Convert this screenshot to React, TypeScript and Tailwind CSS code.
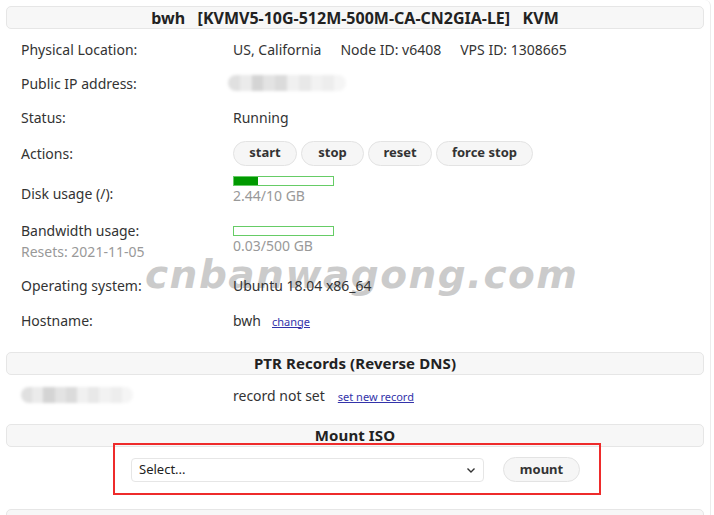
import React from "react";

const font = { fontFamily: '"Noto Sans", "Open Sans", sans-serif' };

function SectionHeader({ title, wide }: { title: string; wide?: boolean }) {
  return (
    <div
      className={`mx-[6px] h-[23px] rounded-[5px] border border-[#e6e6e6] bg-[#f7f7f7] flex items-center justify-center font-bold text-[#222] whitespace-pre ${
        wide ? "text-[16px]" : "text-[15px] tracking-[0.1px]"
      }`}
    >
      {title}
    </div>
  );
}

function Blur({ w }: { w: number }) {
  // pixelated / blurred IP placeholder
  const cells = [0.12, 0.08, 0.17, 0.11, 0.14, 0.06, 0.09, 0.05, 0.07, 0.04];
  return (
    <div className="flex h-[16px] blur-[1.5px] rounded-full overflow-hidden" style={{ width: w }}>
      {cells.map((a, i) => (
        <div key={i} className="flex-1 h-full" style={{ backgroundColor: `rgba(0,0,0,${a})` }} />
      ))}
    </div>
  );
}

function Bar({ pct }: { pct: number }) {
  return (
    <div className="w-[101px] h-[10px] border border-[#66cc66] bg-white">
      <div className="h-full bg-[#009900]" style={{ width: `${pct}%` }} />
    </div>
  );
}

function Btn({ label, w }: { label: string; w: string }) {
  return (
    <button
      className={`${w} h-[25px] rounded-full border border-[#e3e3e3] bg-[#f6f6f6] text-[13px] font-bold text-[#333]`}
    >
      {label}
    </button>
  );
}

export default function App() {
  return (
    <div className="relative w-[714px] h-[515px] overflow-hidden bg-white text-[14px] text-[#333]" style={font}>
      {/* watermark */}
      <div
        className="absolute left-[145px] top-[255px] text-[39px] font-black italic leading-none tracking-[1.5px] text-[#cbcbcb] select-none"
        style={{ fontFamily: '"DejaVu Sans", sans-serif' }}
      >
        cnbanwagong.com
      </div>

      <div className="relative mr-[3px] h-full border-r border-[#ececec] rounded-tr-[6px] pt-[6px]">
        <SectionHeader title="bwh   [KVMV5-10G-512M-500M-CA-CN2GIA-LE]   KVM" wide />

        <div className="pl-[21px] pt-[3px]">
          <div className="flex h-[34px] items-center">
            <div className="w-[212px]">Physical Location:</div>
            <div className="flex gap-[19px]">
              <span>US, California</span>
              <span>Node ID: v6408</span>
              <span>VPS ID: 1308665</span>
            </div>
          </div>
          <div className="flex h-[34px] items-center">
            <div className="w-[207px]">Public IP address:</div>
            <Blur w={118} />
          </div>
          <div className="flex h-[34px] items-center">
            <div className="w-[212px]">Status:</div>
            <div>Running</div>
          </div>
          <div className="flex h-[38px] items-center">
            <div className="w-[212px]">Actions:</div>
            <div className="flex gap-[4px]">
              <Btn label="start" w="w-[64px]" />
              <Btn label="stop" w="w-[63px]" />
              <Btn label="reset" w="w-[64px]" />
              <Btn label="force stop" w="w-[97px]" />
            </div>
          </div>
          <div className="flex h-[42px] items-center">
            <div className="w-[212px]">Disk usage (/):</div>
            <div className="flex flex-col -mt-[4px]">
              <Bar pct={24} />
              <div className="text-[#999] leading-[20px]">2.44/10 GB</div>
            </div>
          </div>
          <div className="flex h-[54px] items-start">
            <div className="w-[212px] pt-[7px] leading-[20px]">
              <div>Bandwidth usage:</div>
              <div className="text-[#999] mt-[1px]">Resets: 2021-11-05</div>
            </div>
            <div className="flex flex-col pt-[12px]">
              <Bar pct={0} />
              <div className="text-[#999] leading-[20px]">0.03/500 GB</div>
            </div>
          </div>
          <div className="flex h-[34px] items-center">
            <div className="w-[212px]">Operating system:</div>
            <div>Ubuntu 18.04 x86_64</div>
          </div>
          <div className="flex h-[36px] items-center">
            <div className="w-[212px]">Hostname:</div>
            <div className="flex items-baseline gap-[11px]">
              <span>bwh</span>
              <a className="text-[11px] text-[#3333aa] underline">change</a>
            </div>
          </div>
        </div>

        <div className="mt-[14px]">
          <SectionHeader title="PTR Records (Reverse DNS)" />
        </div>
        <div className="flex h-[40px] items-center pl-[21px]">
          <div className="w-[212px]">
            <Blur w={112} />
          </div>
          <div className="flex items-baseline gap-[13px]">
            <span>record not set</span>
            <a className="text-[11px] text-[#3333aa] underline">set new record</a>
          </div>
        </div>

        <div className="mt-[9px]">
          <SectionHeader title="Mount ISO" />
        </div>
        <div className="flex h-[62px] items-start pt-[10px] pl-[131px] gap-[19px]">
          <div className="w-[353px] h-[24px] mt-[1px] rounded-[4px] border border-[#e6e6e6] bg-white flex items-center justify-between pl-[7px] pr-[6px] text-[13px] text-[#222]">
            <span>Select...</span>
            <svg width="12" height="12" viewBox="0 0 12 12" fill="none" stroke="#333" strokeWidth="1.4">
              <path d="M2.5 4.5 L6 8 L9.5 4.5" />
            </svg>
          </div>
          <Btn label="mount" w="w-[77px]" />
        </div>
        <div className="mx-[6px] h-[23px] rounded-[5px] border border-[#e6e6e6] bg-[#f7f7f7]" />
      </div>

      {/* annotation box */}
      <div className="absolute left-[113px] top-[443px] w-[488px] h-[52px] border-2 border-[#ee2b2b]" />
    </div>
  );
}
